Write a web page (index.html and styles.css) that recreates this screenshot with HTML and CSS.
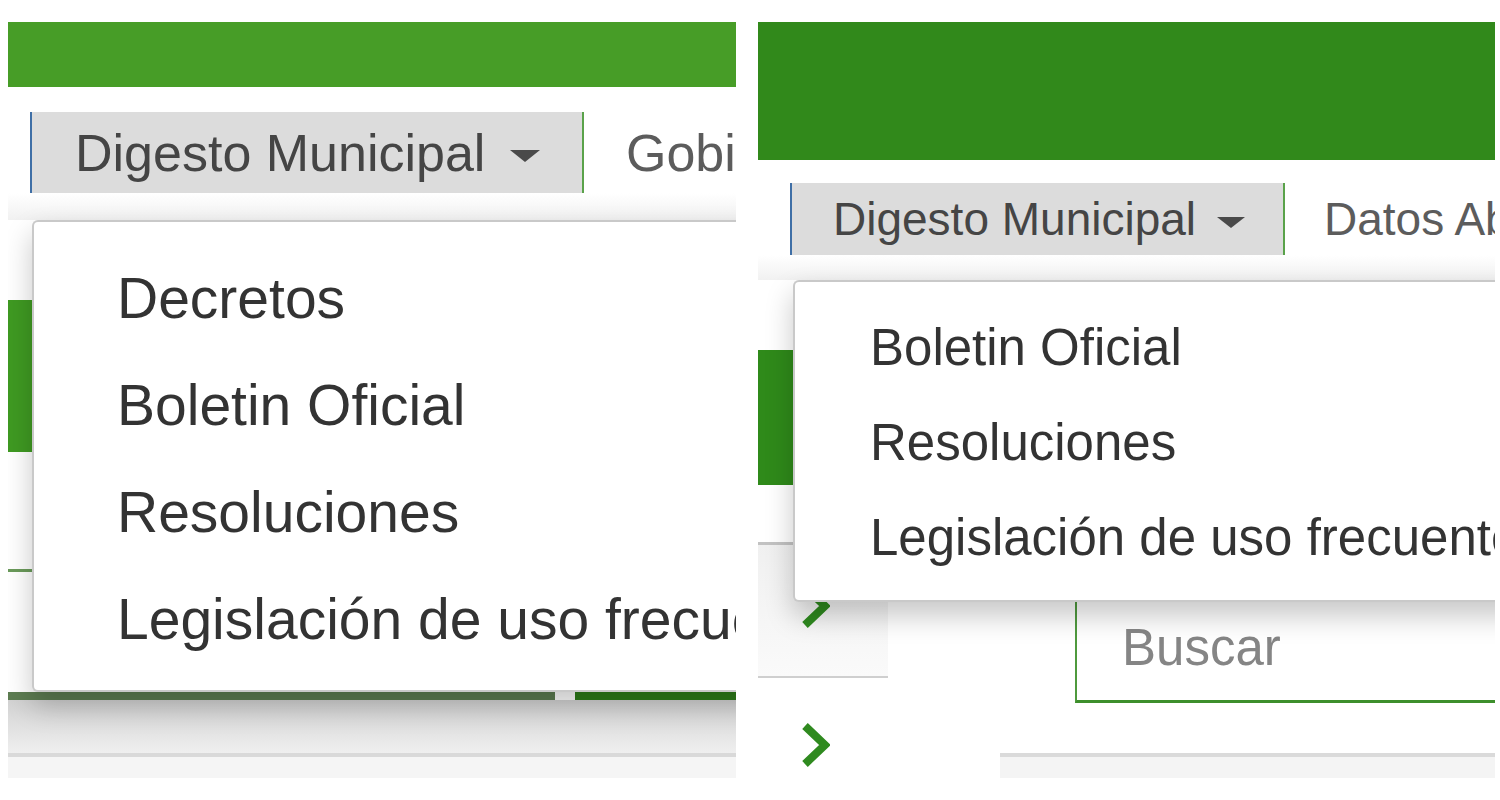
FILE: index.html
```html
<!DOCTYPE html>
<html lang="es">
<head>
<meta charset="utf-8">
<title>Digesto Municipal</title>
<link rel="stylesheet" href="styles.css">
</head>
<body>
<div class="stage">
  <section class="panel panel-a">
    <div class="topbar"></div>
    <nav class="nav">
      <div class="tab"><span class="tab-label">Digesto Municipal</span><span class="caret"></span></div>
      <span class="navlink">Gobierno</span>
    </nav>
    <div class="body">
      <div class="nav-shade"></div>
      <div class="side-block"></div>
      <div class="side-line"></div>
      <div class="bottom-rule"><span class="seg seg-dim"></span><span class="seg seg-green"></span></div>
      <div class="shade"></div>
      <div class="rule-gray"></div>
      <ul class="menu">
        <li>Decretos</li>
        <li>Boletin Oficial</li>
        <li>Resoluciones</li>
        <li>Legislación de uso frecuente</li>
      </ul>
    </div>
  </section>

  <section class="panel panel-b">
    <div class="topbar"></div>
    <nav class="nav">
      <div class="tab"><span class="tab-label">Digesto Municipal</span><span class="caret"></span></div>
      <span class="navlink">Datos Abiertos</span>
    </nav>
    <div class="body">
      <div class="nav-shade"></div>
      <div class="side-block"></div>
      <div class="side-line"></div>
      <div class="row">
        <div class="chev-box">
          <svg class="chev" viewBox="0 0 30 46" width="30" height="46"><polyline points="5,4 25,23 5,42" fill="none" stroke="#2f8a1f" stroke-width="8" stroke-linejoin="miter"/></svg>
        </div>
        <div class="search"><span class="placeholder">Buscar</span></div>
      </div>
      <div class="row row2">
        <svg class="chev chev2" viewBox="0 0 30 46" width="30" height="46"><polyline points="5,4 25,23 5,42" fill="none" stroke="#2f8a1f" stroke-width="8" stroke-linejoin="miter"/></svg>
        <div class="rule-tail"></div>
      </div>
      <ul class="menu">
        <li>Boletin Oficial</li>
        <li>Resoluciones</li>
        <li>Legislación de uso frecuente</li>
      </ul>
    </div>
  </section>
</div>
</body>
</html>
```

FILE: styles.css
```css
* { box-sizing: border-box; }
html, body { margin: 0; padding: 0; background: #fff; }
body {
  font-family: "Liberation Sans", Arial, sans-serif;
  width: 1500px;
  height: 800px;
  overflow: hidden;
}
.stage {
  display: flex;
  align-items: flex-start;
  height: 800px;
}
.panel {
  position: relative;
  overflow: hidden;
  height: 800px;
  flex-shrink: 0;
}
.panel-a { width: 728px; margin-left: 8px; }
.panel-b { width: 737px; margin-left: 22px; }

.topbar { margin-top: 22px; }
.panel-a .topbar { height: 65px; background: #479d27; }
.panel-b .topbar { height: 138px; background: #31891b; }

.nav { display: flex; align-items: stretch; white-space: nowrap; }
.panel-a .nav { margin-top: 25px; height: 81px; padding-left: 22px; }
.panel-b .nav { margin-top: 23px; height: 72px; padding-left: 32px; }

.tab {
  flex-shrink: 0;
  display: flex;
  align-items: center;
  white-space: nowrap;
  background: #dcdcdc;
  border-left: 2px solid #3f6fa6;
  border-right: 2px solid #5aa24a;
  color: #454545;
}
.panel-a .tab { width: 554px; padding-left: 43px; font-size: 52px; }
.panel-b .tab { width: 495px; padding-left: 41px; font-size: 46px; }

.caret {
  flex-shrink: 0;
  width: 0; height: 0;
  border-left: 15px solid transparent;
  border-right: 15px solid transparent;
  border-top: 12px solid #4a4a4a;
}
.panel-a .caret { margin-left: 25px; margin-top: 6px; }
.panel-b .caret { margin-left: 21px; margin-top: 6px; border-top-width: 11px; border-left-width: 14px; border-right-width: 14px; }

.navlink { flex-shrink: 0; display: flex; align-items: center; color: #5c5c5c; white-space: nowrap; }
.panel-a .navlink { margin-left: 42px; font-size: 52px; }
.panel-b .navlink { margin-left: 39px; font-size: 46px; }

.body { position: relative; }
.nav-shade { background: linear-gradient(#ffffff, #f1f1f1); }
.panel-a .nav-shade { height: 27px; }
.panel-b .nav-shade { height: 25px; }

.side-block { background: #3f9a22; }
.panel-a .side-block { margin-top: 80px; width: 24px; height: 152px; }
.panel-b .side-block { margin-top: 70px; width: 35px; height: 135px; background: #2f8a1a; }

.side-line { height: 3px; }
.panel-a .side-line { margin-top: 117px; width: 24px; background: #6a9a5a; }
.panel-b .side-line { margin-top: 57px; width: 35px; background: #c2c2c2; }

.bottom-rule { display: flex; margin-top: 120px; height: 8px; }
.seg { display: block; height: 8px; }
.seg-dim { width: 547px; background: #5d7d52; }
.seg-green { flex: 1; margin-left: 20px; background: #2e7d1a; }

.shade { height: 53px; background: linear-gradient(#d2d2d2, #efefef); }
.rule-gray { height: 25px; border-top: 4px solid #d9d9d9; background: #f5f5f5; }

.row { display: flex; align-items: flex-start; }
.chev-box {
  flex-shrink: 0;
  width: 130px;
  height: 133px;
  border-bottom: 2px solid #cfcfcf;
  background: linear-gradient(#f0f0f0, #fafafa);
  padding-left: 42px;
  padding-top: 38px;
}
.chev { display: block; flex-shrink: 0; }
.search {
  flex: 1;
  margin-left: 187px;
  height: 158px;
  border-left: 2px solid #4f9a3e;
  border-bottom: 3px solid #3d8f2c;
  background: #fff;
  display: flex;
  align-items: flex-end;
  padding-left: 45px;
  padding-bottom: 27px;
}
.placeholder { font-size: 51px; line-height: 1; color: #858585; }

.chev2 { margin-left: 42px; margin-top: 19px; }
.rule-tail {
  flex: 1;
  margin-left: 170px;
  margin-top: 50px;
  height: 25px;
  border-top: 4px solid #dadada;
  background: #f4f4f4;
}

.menu {
  position: absolute;
  right: -40px;
  margin: 0;
  list-style: none;
  background: #fff;
  border: 2px solid #c9c9c9;
  border-right: 0;
  border-radius: 6px 0 0 6px;
  box-shadow: 0 14px 28px rgba(0, 0, 0, 0.22);
  color: #333;
  white-space: nowrap;
}
.panel-a .menu {
  top: 27px;
  left: 24px;
  padding: 23px 0 17px 83px;
  font-size: 57px;
  line-height: 107px;
}
.panel-b .menu {
  top: 25px;
  left: 35px;
  padding: 18px 0 15px 75px;
  font-size: 51px;
  line-height: 95px;
}
.menu li { margin: 0; padding: 0; }
```
